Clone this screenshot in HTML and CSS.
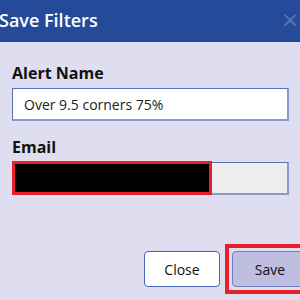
FILE: index.html
```html
<!DOCTYPE html>
<html lang="en">
<head>
    <meta charset="UTF-8">
    <meta name="viewport" content="width=device-width, initial-scale=1.0">
    <title>Save Filters</title>
    <link rel="stylesheet" href="styles.css">
</head>
<body>

<div class="modal">
    <div class="modal-header">
        <h2>Save Filters</h2>
        <span class="close-x">&times;</span>
    </div>

    <div class="modal-body">
        <label>Alert Name</label>
        <input type="text" class="field" value="Over 9.5 corners 75%">

        <label>Email</label>
        <div class="field email">
            <div class="redacted"></div>
        </div>
    </div>

    <div class="modal-footer">
        <button class="btn">Close</button>
        <div class="highlight">
            <button class="btn btn-save">Save</button>
        </div>
    </div>
</div>

</body>
</html>
```

FILE: styles.css
```css
* {
    margin: 0;
    padding: 0;
    box-sizing: border-box;
    font-family: "Open Sans", Arial, sans-serif;
}

body {
    background: #dfdef0;
    width: 300px;
    height: 300px;
    overflow: hidden;
}

.modal-header {
    height: 42px;
    background: #264a9a;
    display: flex;
    align-items: center;
    justify-content: space-between;
    padding-right: 2px;
}

.modal-header h2 {
    color: #fff;
    font-size: 18px;
    font-weight: 600;
    margin-left: -1px;
    margin-top: -3px;
}

.close-x {
    color: #5a72b8;
    font-size: 28px;
    line-height: 1;
    margin-top: -4px;
}

.modal-body {
    padding: 20px 11px 0 12px;
}

.modal-body label {
    display: block;
    font-size: 16px;
    font-weight: 700;
    color: #111;
    height: 26px;
}

.field {
    display: block;
    width: 100%;
    height: 33px;
    border: 1px solid #5b6eb3;
    border-right: 2px solid #8a98cc;
    border-bottom: 2px solid #8a98cc;
    background: #fff;
    padding: 0 11px;
    font-size: 14px;
    font-weight: 500;
    color: #222;
    margin-bottom: 15px;
    outline: none;
}

.email {
    background: #ededed;
    padding: 0;
    position: relative;
}

.redacted {
    position: absolute;
    left: -1px;
    top: -2px;
    width: 200px;
    height: 34px;
    background: #000;
    border: 3px solid #e8202a;
}

.modal-footer {
    display: flex;
    justify-content: flex-end;
    align-items: center;
    gap: 5px;
    margin-top: 49px;
    margin-right: -8px;
}

.btn {
    width: 76px;
    height: 36px;
    border: 1px solid #4a64b5;
    border-radius: 4px;
    background: #fff;
    font-size: 14px;
    font-weight: 500;
    color: #111;
}

.highlight {
    border: 4px solid #e8202a;
    padding: 3px 0 3px 3px;
    border-right: none;
}

.btn-save {
    background: #bfbde0;
    border-color: #6f7dc4;
}
```
